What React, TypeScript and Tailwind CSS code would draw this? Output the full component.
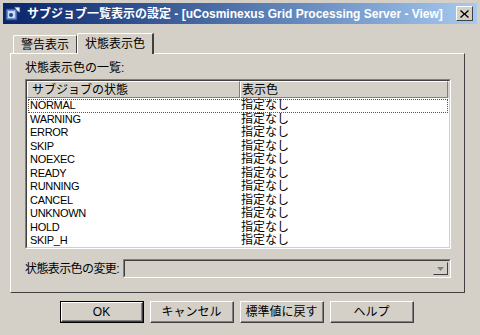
import React from "react";

const jp = { fontFamily: '"Liberation Sans", "Noto Sans CJK JP", sans-serif' };

const rows = ["NORMAL", "WARNING", "ERROR", "SKIP", "NOEXEC", "READY", "RUNNING", "CANCEL", "UNKNOWN", "HOLD", "SKIP_H"];

const AppIcon = () => (
    <svg width="16" height="16" viewBox="0 0 16 16">
        <rect x="1" y="3" width="11" height="11" fill="#6d8fc7" stroke="#1d3d7a" />
        <rect x="3" y="5" width="7" height="7" fill="#c9dcf5" />
        <path d="M9 1 L15 1 L15 7 L12 5 Z" fill="#e8eef9" stroke="#1d3d7a" strokeWidth="0.8" />
        <circle cx="6" cy="9" r="2" fill="#24448a" />
    </svg>
);

// クラシックな3Dボタン
const Button = ({ label, isDefault }: { label: string; isDefault?: boolean }) => (
    <div className={`w-[84px] h-[22px] ${isDefault ? "border border-black" : ""}`}>
        <div className="h-full border-t border-l border-white border-r border-b border-r-[#404040] border-b-[#404040]">
            <div className="h-full flex items-center justify-center border-r border-b border-[#808080] text-[12px] text-black">
                {label}
            </div>
        </div>
    </div>
);

export default function App() {
    return (
        <div className="w-[480px] h-[335px] bg-[#d4d0c8] p-[3px] flex flex-col text-black" style={jp}>
            {/* タイトルバー */}
            <div className="h-[21px] flex items-center pl-[2px] pr-[4px] bg-gradient-to-r from-[#0a246a] to-[#a6caf0]">
                <AppIcon />
                <div className="ml-[6px] text-white font-bold text-[12px] whitespace-nowrap">
                    サブジョブ一覧表示の設定 - [uCosminexus Grid Processing Server - View]
                </div>
                <div className="ml-auto w-[17px] h-[15px] bg-[#d4d0c8] border-t border-l border-white border-r border-b border-r-[#404040] border-b-[#404040] flex items-center justify-center">
                    <svg width="9" height="8" viewBox="0 0 9 8">
                        <path d="M1 0 L4.5 3.2 L8 0 L9 1 L5.6 4 L9 7 L8 8 L4.5 4.8 L1 8 L0 7 L3.4 4 L0 1 Z" fill="#000" />
                    </svg>
                </div>
            </div>

            {/* タブ */}
            <div className="flex items-end h-[29px] pl-[10px]">
                <div className="h-[18px] px-[7px] flex items-center text-[12px] border-t border-l border-white border-r border-r-[#404040] rounded-tl-[2px]">
                    警告表示
                </div>
                <div className="relative h-[21px] px-[7px] flex items-center text-[12px] border-t border-l border-white border-r-2 border-r-[#404040] rounded-tl-[2px] bg-[#d4d0c8] -mb-[1px] z-10">
                    状態表示色
                </div>
            </div>

            {/* タブパネル */}
            <div className="ml-[7px] w-[455px] h-[240px] border-t border-l border-white border-r border-b border-r-[#404040] border-b-[#404040] flex flex-col pl-[14px] pr-[13px]">
                <div className="mt-[7px] h-[14px] text-[12px] leading-[14px]">状態表示色の一覧:</div>
                <div className="mt-[4px] h-[170px] border-t border-l border-[#808080] border-r border-b border-r-white border-b-white">
                    <div className="h-full bg-white border-t border-l border-[#404040] border-r border-b border-r-[#d4d0c8] border-b-[#d4d0c8] flex flex-col">
                        <div className="h-[17px] flex bg-[#d4d0c8] text-[12px]">
                            <div className="w-[213px] h-full border-t border-l border-white border-r border-b border-r-[#808080] border-b-[#808080] pl-[4px] flex items-center">
                                サブジョブの状態
                            </div>
                            <div className="w-[208px] h-full border-t border-l border-white border-r border-b border-r-[#808080] border-b-[#808080] pl-[1px] flex items-center">
                                表示色
                            </div>
                            <div className="flex-1 border-t border-white" />
                        </div>
                        <div className="flex flex-col pt-[1px]">
                            {rows.map((r, i) => (
                                <div
                                    key={r}
                                    className={`h-[13.5px] flex items-center text-[12px] leading-[13px] ml-[1px] w-[420px] ${i === 0 ? "outline outline-1 outline-dotted outline-[#555] -outline-offset-1" : ""}`}
                                >
                                    <div className="w-[212px] pl-[2px] text-[11px] tracking-[-0.3px]">{r}</div>
                                    <div className="pl-[1px]">指定なし</div>
                                </div>
                            ))}
                        </div>
                    </div>
                </div>
                <div className="mt-[10px] flex items-center h-[19px]">
                    <div className="w-[98px] shrink-0 whitespace-nowrap text-[12px] tracking-[-0.6px]">状態表示色の変更:</div>
                    <div className="flex-1 h-[19px] border-t border-l border-[#808080] border-r border-b border-r-white border-b-white">
                        <div className="h-full border-t border-l border-[#404040] border-r border-b border-r-[#d4d0c8] border-b-[#d4d0c8] flex justify-end p-[1px]">
                            <div className="w-[15px] h-full border-t border-l border-[#d4d0c8] border-r border-b border-r-[#404040] border-b-[#404040] flex items-center justify-center">
                                <svg width="7" height="4" viewBox="0 0 7 4">
                                    <path d="M0 0 L7 0 L3.5 4 Z" fill="#808080" />
                                </svg>
                            </div>
                        </div>
                    </div>
                </div>
            </div>

            {/* ボタン */}
            <div className="mt-[8px] pl-[57px] flex gap-[6px]">
                <Button label="OK" isDefault />
                <Button label="キャンセル" />
                <Button label="標準値に戻す" />
                <Button label="ヘルプ" />
            </div>
        </div>
    );
}
